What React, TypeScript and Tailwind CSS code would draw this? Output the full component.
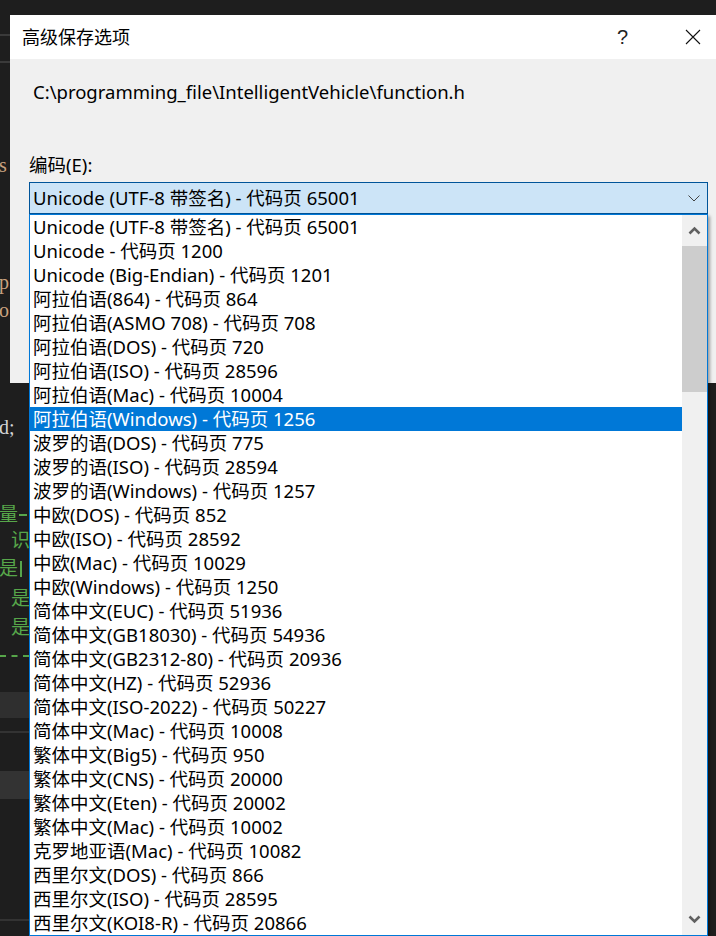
import React from 'react';

const encodings = [
  'Unicode (UTF-8 带签名) - 代码页 65001',
  'Unicode - 代码页 1200',
  'Unicode (Big-Endian) - 代码页 1201',
  '阿拉伯语(864) - 代码页 864',
  '阿拉伯语(ASMO 708) - 代码页 708',
  '阿拉伯语(DOS) - 代码页 720',
  '阿拉伯语(ISO) - 代码页 28596',
  '阿拉伯语(Mac) - 代码页 10004',
  '阿拉伯语(Windows) - 代码页 1256',
  '波罗的语(DOS) - 代码页 775',
  '波罗的语(ISO) - 代码页 28594',
  '波罗的语(Windows) - 代码页 1257',
  '中欧(DOS) - 代码页 852',
  '中欧(ISO) - 代码页 28592',
  '中欧(Mac) - 代码页 10029',
  '中欧(Windows) - 代码页 1250',
  '简体中文(EUC) - 代码页 51936',
  '简体中文(GB18030) - 代码页 54936',
  '简体中文(GB2312-80) - 代码页 20936',
  '简体中文(HZ) - 代码页 52936',
  '简体中文(ISO-2022) - 代码页 50227',
  '简体中文(Mac) - 代码页 10008',
  '繁体中文(Big5) - 代码页 950',
  '繁体中文(CNS) - 代码页 20000',
  '繁体中文(Eten) - 代码页 20002',
  '繁体中文(Mac) - 代码页 10002',
  '克罗地亚语(Mac) - 代码页 10082',
  '西里尔文(DOS) - 代码页 866',
  '西里尔文(ISO) - 代码页 28595',
  '西里尔文(KOI8-R) - 代码页 20866',
];

const SELECTED = 8;

const uiFont = "font-['Noto_Sans','Noto_Sans_CJK_SC',sans-serif]";

// the code editor peeking out behind the dialog (only a 29px strip is visible)
const EditorBackdrop = () => (
  <div className="flex flex-col w-[29px] h-full overflow-hidden whitespace-nowrap font-['Liberation_Serif','Noto_Sans_CJK_SC',serif] text-[20px]">
    <div className="h-[34px]" />
    <div className="h-[2px] w-[10px] bg-[#3a3a3a]" />
    <div className="h-[25px]" />
    <div className="h-[2px] w-[10px] bg-[#3a3a3a]" />
    <div className="h-[87px]" />
    <div className="h-[30px] leading-[30px] text-[#c9a27e] -ml-[1px]">s</div>
    <div className="h-[88px]" />
    <div className="h-[28px] leading-[28px] text-[#c9a27e] -ml-[1px]">p</div>
    <div className="h-[28px] leading-[28px] text-[#c9a27e] -ml-[1px]">o</div>
    <div className="h-[88px]" />
    <div className="h-[30px] leading-[30px] text-[#d4d4d4] -ml-[1px]">d;</div>
    <div className="h-[60px]" />
    <div className="h-[26px] flex items-center text-[#57a64a] text-[19px] -ml-[1px]">
      <span className="leading-[26px]">量</span>
      <div className="ml-[1px] w-[8px] h-[2px] bg-[#57a64a]" />
    </div>
    <div className="h-[26px] leading-[26px] text-[#57a64a] text-[19px] pl-[11px]">识</div>
    <div className="h-[30px] flex items-center text-[#57a64a] text-[19px] -ml-[1px]">
      <span className="leading-[30px]">是</span>
      <div className="ml-[2px] w-[2px] h-[16px] bg-[#57a64a]" />
    </div>
    <div className="h-[30px] leading-[30px] text-[#57a64a] text-[19px] pl-[11px]">是</div>
    <div className="h-[28px] leading-[28px] text-[#57a64a] text-[19px] pl-[11px]">是</div>
    <div className="h-[28px] flex items-center">
      <div className="w-full border-t-2 border-dashed border-[#57a64a]" />
    </div>
    <div className="h-[22px]" />
    <div className="h-[26px] w-full bg-[#2f2f2f]" />
    <div className="h-[13px]" />
    <div className="h-[2px] w-full bg-[#333333]" />
    <div className="h-[38px]" />
    <div className="h-[28px] w-full bg-[#333333]" />
    <div className="h-[120px]" />
    <div className="h-[2px] w-full bg-[#333333]" />
  </div>
);

const ChevronThick = ({ up }: { up: boolean }) => (
  <svg width="13" height="9" viewBox="0 0 13 9">
    <polyline
      points={up ? '1.5,7.5 6.5,2.5 11.5,7.5' : '1.5,1.5 6.5,6.5 11.5,1.5'}
      fill="none"
      stroke="#606060"
      strokeWidth="2.6"
    />
  </svg>
);

export default function App() {
  return (
    <div className={`relative w-[716px] h-[936px] overflow-hidden bg-[#1e1e1e] ${uiFont}`}>
      <EditorBackdrop />

      {/* dialog */}
      <div className="absolute left-[10px] top-[15px] w-[706px] h-[368px] flex flex-col bg-[#f0f0f0]">
        <div className="h-[44px] bg-white flex items-center pl-[12px] pr-[15px] text-[18px] text-black">
          <span className="flex-1 leading-[24px]">高级保存选项</span>
          <span className="font-['Liberation_Sans',sans-serif] font-light text-[20px] text-[#222] leading-[24px] mr-[57px]">?</span>
          <svg width="16" height="16" viewBox="0 0 16 16">
            <path d="M1 1 L15 15 M15 1 L1 15" stroke="#111" strokeWidth="1.1" fill="none" />
          </svg>
        </div>
        <div className="flex flex-col text-[18.5px] text-black leading-[24px]">
          <div className="pt-[21px] pl-[23px]">C:\programming_file\IntelligentVehicle\function.h</div>
          <div className="mt-[49px] pl-[19px]">编码(E):</div>
          <div className="mt-[5px] ml-[19px] w-[679px] h-[32px] border border-[#005499] bg-[#cce4f7] flex items-center pl-[3px] pr-[7px]">
            <span className="flex-1">Unicode (UTF-8 带签名) - 代码页 65001</span>
            <svg width="12" height="7" viewBox="0 0 12 7">
              <polyline points="0.5,0.5 6,6 11.5,0.5" fill="none" stroke="#444" strokeWidth="1" />
            </svg>
          </div>
        </div>
      </div>

      {/* open dropdown list */}
      <div className="absolute left-[29px] top-[214px] w-[679px] h-[722px] border border-[#0078d7] bg-white flex shadow-[2px_2px_3px_rgba(0,0,0,0.35)]">
        <div className="w-[652px] flex flex-col text-[18.5px] leading-[24px]">
          {encodings.map((e, i) => (
            <div
              key={e}
              className={`h-[24px] pl-[3px] whitespace-nowrap ${i === SELECTED ? 'bg-[#0078d7] text-white' : 'text-black'}`}
            >
              {e}
            </div>
          ))}
        </div>
        <div className="w-[25px] bg-[#f0f0f0] flex flex-col">
          <div className="h-[31px] flex items-center justify-center">
            <ChevronThick up />
          </div>
          <div className="h-[146px] bg-[#cdcdcd]" />
          <div className="flex-1" />
          <div className="h-[31px] flex items-center justify-center">
            <ChevronThick up={false} />
          </div>
        </div>
      </div>
    </div>
  );
}
